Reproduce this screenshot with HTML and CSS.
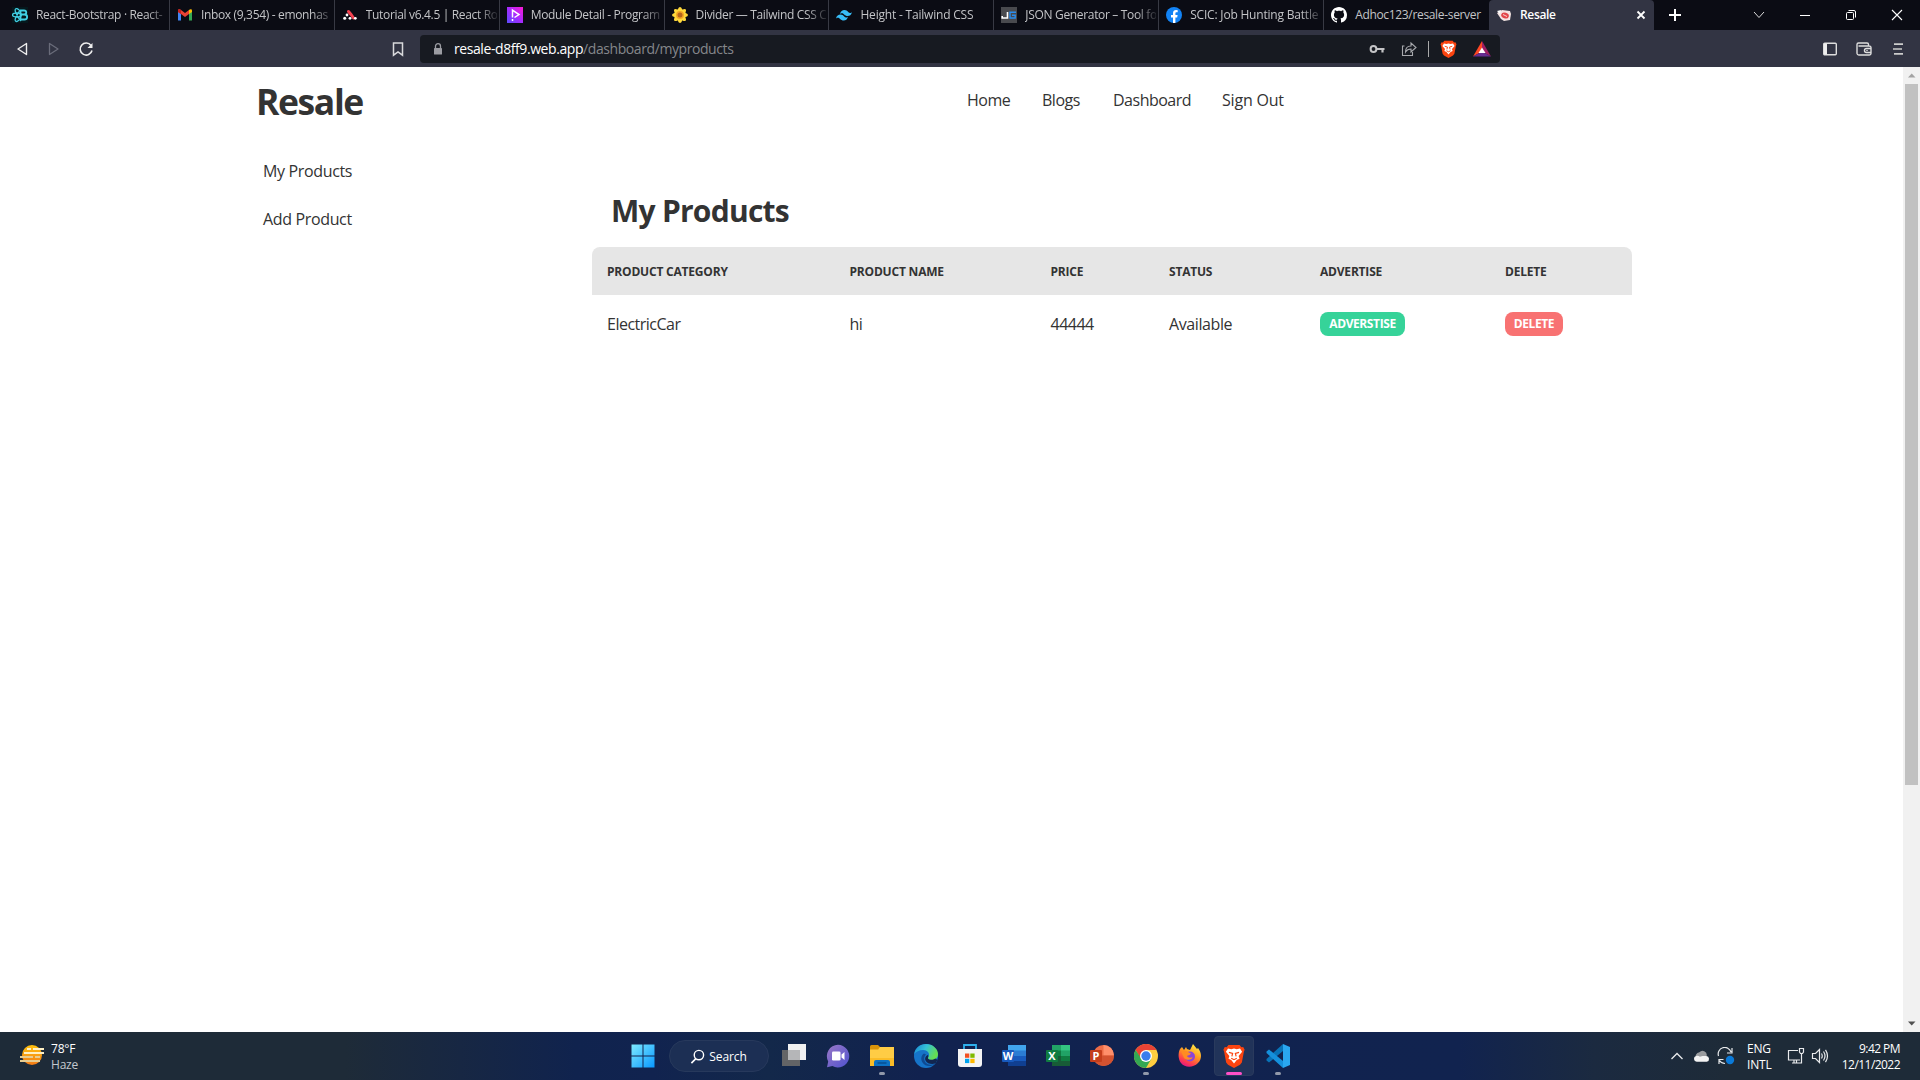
FILE: index.html
```html
<!DOCTYPE html>
<html lang="en">
<head>
<meta charset="utf-8">
<title>Resale</title>
<link rel="stylesheet" href="styles.css">
</head>
<body>
<div class="screen">
  <div class="tabs">
    <div class="tab">
      <svg class="fav" viewBox="0 0 16 16"><rect width="16" height="16" fill="#05181d"/><g fill="none" stroke="#41cfe4" stroke-width="1.3"><path d="M7 3C4 0 2 2 4 6c2 5 4 7 5 8M7 13c-3 3-5 1-3-3l4-7"/><ellipse cx="5" cy="8" rx="4.5" ry="2"/><path d="M8.500 3.500h3.500c3 0 3 4 0 4h-3.500zM8.500 7.500h4c3.500 0 3.500 5 0 5h-4z" stroke-width="1.8"/></g></svg>
      <span class="tab-title">React-Bootstrap · React-</span></div>
    <div class="tab">
      <svg class="fav" viewBox="0 0 16 16"><path d="M1 3.500v10h3V6z" fill="#4285f4"/><path d="M15 3.500v10h-3V6z" fill="#34a853"/><path d="M1 5V3.500C1 2 3 2 4 3l4 3 4-3v4L8 10 4 7z" fill="#ea4335"/><path d="M12 3c1-1 3-1 3 .5V5l-3 2z" fill="#fbbc04"/><path d="M1 3.500C1 2 3 2 4 3v4L1 5z" fill="#c5221f"/></svg>
      <span class="tab-title">Inbox (9,354) - emonhas</span></div>
    <div class="tab">
      <svg class="fav" viewBox="0 0 16 16"><path d="M6.500 4.500 9 7.500l2.500 3.500" stroke="#f44250" stroke-width="3" stroke-linecap="round" fill="none"/><g fill="#fff"><circle cx="5" cy="8" r="1.400"/><circle cx="2.700" cy="11.300" r="1.500"/><circle cx="8" cy="11.300" r="1.400"/><circle cx="13.300" cy="11.300" r="1.400"/></g></svg>
      <span class="tab-title">Tutorial v6.4.5 | React Ro</span></div>
    <div class="tab">
      <svg class="fav" viewBox="0 0 16 16"><defs><linearGradient id="ph" x1="0" y1="1" x2="1" y2="0"><stop offset="0" stop-color="#5b4bff"/><stop offset=".5" stop-color="#a62bff"/><stop offset="1" stop-color="#ff19d4"/></linearGradient></defs><rect width="16" height="16" fill="url(#ph)"/><path d="M5.500 10.500V3.200l6.500 4.300-4.500 3M5.500 12v2" fill="none" stroke="#fff" stroke-width="1.500"/></svg>
      <span class="tab-title">Module Detail - Program</span></div>
    <div class="tab">
      <svg class="fav" viewBox="0 0 16 16"><g fill="#ffd83b"><ellipse cx="8" cy="8" rx="3" ry="8"/><ellipse cx="8" cy="8" rx="3" ry="8" transform="rotate(45 8 8)"/><ellipse cx="8" cy="8" rx="3" ry="8" transform="rotate(90 8 8)"/><ellipse cx="8" cy="8" rx="3" ry="8" transform="rotate(135 8 8)"/></g><circle cx="8" cy="8" r="4" fill="#f5a623"/><circle cx="8" cy="8" r="2.500" fill="#b5651d"/></svg>
      <span class="tab-title">Divider — Tailwind CSS C</span></div>
    <div class="tab">
      <svg class="fav" viewBox="0 0 16 16"><path d="M4 7c.8-3 2.300-4 4.500-4C12 3 12 6 14 6c1 0 1.500-.3 2-1-.8 3-2.300 4-4.300 4C8.500 9 8 6.200 6 6.200 5 6.200 4.500 6.500 4 7zM0 11.500c.8-3 2.300-4 4.500-4 3.500 0 3.500 3 5.500 3 1 0 1.500-.3 2-1-.8 3-2.300 4-4.300 4-3.200 0-3.700-2.800-5.700-2.800-1 0-1.500.3-2 .8z" fill="#38bdf8"/></svg>
      <span class="tab-title wide">Height - Tailwind CSS</span></div>
    <div class="tab">
      <svg class="fav" viewBox="0 0 16 16"><rect width="16" height="16" fill="#494a4e"/><path d="M6.500 5v6H1.200V9" fill="none" stroke="#fff" stroke-width="1.600"/><path d="M15 5.200H9V11h5.200V8.300H11" fill="none" stroke="#2a8df0" stroke-width="1.400"/></svg>
      <span class="tab-title">JSON Generator – Tool fo</span></div>
    <div class="tab">
      <svg class="fav" viewBox="0 0 16 16"><circle cx="8" cy="8" r="8" fill="#1283f5"/><path d="M7 16v-5.600H5V8h2V6.300c0-2.200 1.200-3.300 3.100-3.300l1.600.2v2h-1c-1 0-1.300.6-1.300 1.200V8h2.200l-.4 2.400H9.400V16z" fill="#fff"/></svg>
      <span class="tab-title wide">SCIC: Job Hunting Battle</span></div>
    <div class="tab tab-last">
      <svg class="fav" viewBox="0 0 16 16"><path fill="#fff" d="M8 0C3.580 0 0 3.580 0 8c0 3.540 2.290 6.530 5.470 7.590.4.070.55-.17.55-.38 0-.19-.01-.82-.01-1.490-2.010.37-2.530-.49-2.690-.94-.09-.23-.48-.94-.82-1.130-.28-.15-.68-.52-.01-.53.63-.01 1.080.58 1.230.82.72 1.210 1.870.87 2.330.66.07-.52.28-.87.510-1.070-1.780-.2-3.640-.89-3.640-3.950 0-.87.310-1.590.82-2.150-.08-.2-.36-1.020.08-2.120 0 0 .67-.21 2.200.82.640-.18 1.320-.27 2-.27s1.360.09 2 .27c1.530-1.040 2.200-.82 2.200-.82.440 1.100.160 1.920.08 2.120.510.560.82 1.270.82 2.150 0 3.070-1.870 3.750-3.650 3.950.290.250.540.730.540 1.480 0 1.070-.01 1.930-.01 2.200 0 .210.150.460.550.380A8.010 8.010 0 0 0 16 8c0-4.420-3.580-8-8-8z"/></svg>
      <span class="tab-title">Adhoc123/resale-server</span></div>
    <div class="tab tab-active">
      <svg class="fav" viewBox="0 0 16 16"><path d="M1 6l5-3 8 1 1 3-1 6-6 1-3-2z" fill="#f4e4e2"/><path d="M1 4l4-1-1 4z" fill="#fff"/><ellipse cx="9" cy="8.500" rx="3.900" ry="2.900" transform="rotate(18 9 8.500)" fill="#e2474a"/><path d="M7 7.500l4 2" stroke="#fbd0cc"/></svg>
      <span class="tab-title">Resale</span>
      <svg class="tab-close" viewBox="0 0 10 10"><path d="M1.500 1.500l7 7m0-7l-7 7" stroke="#fff" stroke-width="1.800"/></svg></div>
    <svg class="plus" viewBox="0 0 14 14"><path d="M7 1v12M1 7h12" stroke="#fff" stroke-width="2"/></svg>
    <div class="window-buttons">
      <svg viewBox="0 0 12 12"><path d="M1 3l5 5.500L11 3" fill="none" stroke="#ddd"/></svg>
      <svg viewBox="0 0 12 12"><path d="M1 6.500h10" stroke="#fff"/></svg>
      <svg viewBox="0 0 12 12"><rect x="1.500" y="3.500" width="7" height="7" rx="1" fill="none" stroke="#fff"/><path d="M3.500 1.500H9a1.500 1.500 0 0 1 1.500 1.500v5.500" fill="none" stroke="#fff"/></svg>
      <svg viewBox="0 0 12 12"><path d="M1 1l10 10M11 1L1 11" stroke="#fff" stroke-width="1.100"/></svg>
    </div>
  </div>

  <div class="toolbar">
    <div class="nav-icons">
      <svg viewBox="0 0 16 16"><path d="M12.500 2.500L4 8l8.500 5.500z" fill="none" stroke="#eee" stroke-width="1.400" stroke-linejoin="round"/></svg>
      <svg viewBox="0 0 16 16"><path d="M3.500 2.500L12 8l-8.500 5.500z" fill="none" stroke="#6a6c7a" stroke-width="1.300" stroke-linejoin="round"/></svg>
      <svg viewBox="0 0 16 16"><path d="M13 4.500A6 6 0 1 0 14 9.500" fill="none" stroke="#eee" stroke-width="1.600"/><path d="M14.500 2v5h-5z" fill="#eee"/></svg>
    </div>
    <svg class="bookmark" viewBox="0 0 16 16"><path d="M3.500 2h9v12.200L8 11l-4.500 3.200z" fill="none" stroke="#d9d9dc" stroke-width="1.500"/></svg>
    <div class="address">
      <svg class="lock" viewBox="0 0 10 12"><path d="M2.500 5V3.200a2.500 2.500 0 0 1 5 0V5" fill="none" stroke="#9b9ca2" stroke-width="1.300"/><rect x="1" y="5" width="8" height="6.500" rx=".6" fill="#9b9ca2"/></svg>
      <span class="url"><b>resale-d8ff9.web.app</b>/dashboard/myproducts</span>
      <div class="address-icons">
        <svg viewBox="0 0 16 16"><circle cx="4.500" cy="8" r="2.900" fill="none" stroke="#c4c4c6" stroke-width="2"/><path d="M7 8h8.500M13.500 8v3.500" stroke="#c4c4c6" stroke-width="2.200"/></svg>
        <svg viewBox="0 0 16 16"><path d="M3.500 5H1.500v9.500h10V11" fill="none" stroke="#a8a9ad" stroke-width="1.100"/><path d="M4.500 11c0-4 2-6 5.500-6V2l5 4.500-5 4.500V8C7.500 8 5.800 8.800 4.500 11z" fill="none" stroke="#a8a9ad" stroke-width="1.100"/></svg>
        <i class="divider"></i>
        <svg class="shield" viewBox="0 0 24 26"><use href="#brave"/></svg>
        <svg class="bat" viewBox="0 0 18 16"><path d="M9 0L0 15.500l9-5z" fill="#ff4724"/><path d="M9 0l9 15.500-9-5z" fill="#9e1f63"/><path d="M0 15.500h18l-9-5z" fill="#662d91"/><path d="M9 6.500l3.500 5.500h-7z" fill="#fff"/></svg>
      </div>
    </div>
    <div class="menu-icons">
      <svg viewBox="0 0 16 16"><rect x="1.700" y="2.200" width="12.600" height="11.600" rx="1" fill="none" stroke="#ddd" stroke-width="1.400"/><path d="M2 2.500h3v11H2z" fill="#eee"/></svg>
      <svg viewBox="0 0 16 16"><path d="M12.500 5V3.500Q12.500 2 11 2H2.500A1.500 1.500 0 0 0 1 3.500v9A1.800 1.800 0 0 0 2.800 14h10.400a1.800 1.800 0 0 0 1.800-1.800V6.800A1.800 1.800 0 0 0 13.200 5H2.500" fill="none" stroke="#ddd" stroke-width="1.400"/><path d="M15 7.500h-4.500a2 2 0 0 0 0 4H15" fill="none" stroke="#ddd" stroke-width="1.400"/><circle cx="11" cy="9.500" r=".8" fill="#ddd"/></svg>
      <svg viewBox="0 0 16 16"><path d="M4 3.200h9M3 8h9M4 12.800h9" stroke="#ccc" stroke-width="1.700"/></svg>
    </div>
  </div>

  <div class="viewport">
    <div class="page">
      <header class="site-header">
        <a class="brand">Resale</a>
        <nav class="site-nav"><a class="n-home">Home</a><a class="n-blogs">Blogs</a><a class="n-dash">Dashboard</a><a class="n-out">Sign Out</a></nav>
      </header>
      <div class="content">
        <aside class="sidebar"><a>My Products</a><a>Add Product</a></aside>
        <main class="products">
          <h2>My Products</h2>
          <table>
            <colgroup><col class="c1"><col class="c2"><col class="c3"><col class="c4"><col class="c5"><col class="c6"></colgroup>
            <thead><tr><th>Product Category</th><th>Product Name</th><th>Price</th><th>Status</th><th>Advertise</th><th>Delete</th></tr></thead>
            <tbody><tr><td>ElectricCar</td><td>hi</td><td>44444</td><td>Available</td><td><button class="btn advertise">Adverstise</button></td><td><button class="btn delete">Delete</button></td></tr></tbody>
          </table>
        </main>
      </div>
    </div>
    <div class="scrollbar">
      <svg viewBox="0 0 17 17"><path d="M5 10.500h7.500L8.700 6.500z" fill="#a3a3a3"/></svg>
      <i class="thumb"></i>
      <svg class="down" viewBox="0 0 17 17"><path d="M5 6.500h7.500L8.700 10.500z" fill="#505050"/></svg>
    </div>
  </div>

  <div class="taskbar">
    <div class="weather">
      <svg viewBox="0 0 24 24"><defs><linearGradient id="sun" x1="0" y1="0" x2="0" y2="1"><stop offset="0" stop-color="#ffc20e"/><stop offset="1" stop-color="#f47b16"/></linearGradient></defs><circle cx="12" cy="12" r="10" fill="url(#sun)"/><path d="M7 6h4m2 0h11M4 10h20" stroke="#fff0c4" stroke-width="2"/><path d="M0 14h13m2 0h5M0 18h20" stroke="#e9cc8f" stroke-width="2"/></svg>
      <div><div>78°F</div><div class="dim">Haze</div></div>
    </div>
    <div class="apps">
      <div class="app"><svg viewBox="0 0 24 24"><defs><linearGradient id="win" x1="0" y1="0" x2="1" y2="1"><stop offset="0" stop-color="#7eeaff"/><stop offset="1" stop-color="#0898ff"/></linearGradient></defs><path d="M.5.5h11v11H.5zm12 0h11v11h-11zM.5 12.500h11v11H.5zm12 0h11v11h-11z" fill="url(#win)"/></svg></div>
      <div class="search"><svg viewBox="0 0 16 16"><circle cx="9.500" cy="6.500" r="5" fill="none" stroke="#fff" stroke-width="1.500"/><path d="M6 10.500L1.500 15" stroke="#fff" stroke-width="1.700"/></svg>Search</div>
      <div class="app"><svg viewBox="0 0 24 24"><path d="M0 6h18v16H0z" fill="#636466"/><path d="M6 0h18v16H6z" fill="#f1f1f1"/><path d="M6 6h12v10H6z" fill="#b5b6b8"/></svg></div>
      <div class="app"><svg viewBox="0 0 24 24"><defs><linearGradient id="chat" x1="0" y1="0" x2="1" y2="1"><stop offset="0" stop-color="#9a78c6"/><stop offset="1" stop-color="#4f52cf"/></linearGradient></defs><path d="M12 .8A11.300 11.300 0 1 1 6.500 22L1 23.200 2.200 17.500A11.300 11.300 0 0 1 12 .8z" fill="url(#chat)"/><rect x="6" y="7.500" width="8.500" height="9" rx="1.300" fill="#fff"/><path d="M15.500 10.500l3-2.500v8l-3-2.500z" fill="#fff"/></svg></div>
      <div class="app running"><svg viewBox="0 0 24 24"><path d="M0 2.500Q0 1 1.500 1H8l2.500 2.500L8 6H0z" fill="#d9930a"/><path d="M0 5.500h8L10 3h14v19H0z" fill="#ffcc45"/><path d="M0 14h24v8H0z" fill="#fbbc27"/><path d="M4 22v-4q0-2 2-2h12q2 0 2 2v4z" fill="#0d72c4"/><path d="M7.500 19h9" stroke="#075193" stroke-width="1.500"/></svg></div>
      <div class="app"><svg viewBox="0 0 24 24"><defs><linearGradient id="edge" x1="0" y1="0" x2="1" y2=".4"><stop offset="0" stop-color="#1683d2"/><stop offset=".5" stop-color="#34c1d8"/><stop offset="1" stop-color="#64df52"/></linearGradient></defs><circle cx="12" cy="12" r="12" fill="#1674c9"/><path d="M.2 10C1 4 6 0 12 0c7 0 12 5 12 10 0 4-3 6-6 6s-4-1-4-2 1.500-1.500 1-4c-.6-2.500-3-4-6-4C5 6 2 8 .2 10z" fill="url(#edge)"/><path d="M10 9.500c-3 2-3.500 6-1.500 9 2.500 3.800 8 5 12.500 1.500-4 1.500-9 1-10.500-3.500-1-3 .500-5 1.500-6z" fill="#0f4a92"/><path d="M14 11c1 2-.6 2.500 0 3.500.8 1.500 4.500 2 7.500 0l2 1.500-2 3.500c-3.500 1-8.500.5-10-3-1-2.500.5-5 2.500-5.500z" fill="#12264f"/></svg></div>
      <div class="app"><svg viewBox="0 0 24 24"><path d="M6 6V1h12v5" fill="none" stroke="#2fb1ee" stroke-width="1.800"/><path d="M0 5h24v15q0 3-3 3H3q-3 0-3-3z" fill="#f4f4f5"/><path d="M7 9.500h4.300v4.300H7z" fill="#f25022"/><path d="M12.300 9.500h4.300v4.300h-4.300z" fill="#7fba00"/><path d="M7 14.800h4.300v4.300H7z" fill="#00a4ef"/><path d="M12.300 14.800h4.300v4.300h-4.300z" fill="#ffb900"/></svg></div>
      <div class="app"><svg viewBox="0 0 24 24"><path d="M6 1h18v6H6z" fill="#41a5ee"/><path d="M6 6.500h18V12H6z" fill="#2b7cd3"/><path d="M6 12h18v5.500H6z" fill="#185abd"/><path d="M6 17h18v5H6z" fill="#103f91"/><rect y="6" width="12" height="12" rx="1" fill="#185abd"/><text x="6" y="15.500" class="glyph">W</text></svg></div>
      <div class="app"><svg viewBox="0 0 24 24"><path d="M6 1h9v6H6z" fill="#21a366"/><path d="M15 1h9v6h-9z" fill="#33c481"/><path d="M6 6.500h9V12H6z" fill="#107c41"/><path d="M15 6.500h9V12h-9z" fill="#21a366"/><path d="M6 12h18v10H6z" fill="#185c37"/><path d="M15 12h9v5h-9z" fill="#107c41"/><rect y="6" width="12" height="12" rx="1" fill="#107c41"/><text x="6" y="15.500" class="glyph">X</text></svg></div>
      <div class="app"><svg viewBox="0 0 24 24"><circle cx="13.500" cy="11.500" r="10.500" fill="#ed6c47"/><path d="M13.500 1A10.500 10.500 0 0 1 24 11.500H13.500z" fill="#ff8f6b"/><path d="M3 11.500h21a10.500 10.500 0 0 1-21 0z" fill="#d35230"/><rect y="6" width="12" height="12" rx="1" fill="#c43e1c"/><text x="6" y="15.500" class="glyph">P</text></svg></div>
      <div class="app running"><svg viewBox="0 0 24 24"><circle cx="12" cy="12" r="12" fill="#ffcd40"/><path d="M1.600 6A12 12 0 0 1 22.400 6H12L7 15z" fill="#ea4335"/><path d="M1.600 6A12 12 0 0 0 12 24l5.200-9-5.200 2-5-3z" fill="#34a853"/><circle cx="12" cy="12" r="6" fill="#fff"/><circle cx="12" cy="12" r="4.700" fill="#3b7ded"/></svg></div>
      <div class="app"><svg viewBox="0 0 24 24"><defs><linearGradient id="fox" x1=".8" y1="0" x2=".3" y2="1"><stop offset="0" stop-color="#fff04a"/><stop offset=".45" stop-color="#ff9a1f"/><stop offset=".8" stop-color="#ff3b4f"/><stop offset="1" stop-color="#e31587"/></linearGradient></defs><path d="M2 5l2-2 2 3 2-3 1 2 3 1 3-6 4 5 1-1c4 5 4 11 0 15-5 5-13 5-17 0C0 15 0 9 2 5z" fill="url(#fox)"/><circle cx="12" cy="12.500" r="5" fill="#8a45d8"/><path d="M3 7c3-1 6 0 8 1.500l2 1c-1 2-3 1.500-4 2.500 1 2 4 2 5.500 1 0 3-6 4-8.500 1z" fill="#ff8c22"/></svg></div>
      <div class="app current"><svg viewBox="0 0 24 26"><use href="#brave"/></svg></div>
      <div class="app running"><svg viewBox="0 0 24 24"><path d="M17 0l7 3v18l-7 3z" fill="#2aa7f0"/><path d="M17 0v7L3 18.500.5 16.500V15z" fill="#0873b8"/><path d="M17 24v-7L3 5.500.5 7.500V9z" fill="#1590dc"/></svg></div>
    </div>
    <div class="tray">
      <svg class="t-chev" viewBox="0 0 14 14"><path d="M1.500 10L7 4.500l5.500 5.500" fill="none" stroke="#e8eaec" stroke-width="1.300"/></svg>
      <svg class="t-cloud" viewBox="0 0 16 12"><path d="M3 8a4 4 0 0 1 3-6 4 4 0 0 1 7 3l-4 4z" fill="#9a9c9f"/><path d="M3.500 11a2.800 2.800 0 0 1-.5-5.500q2-.5 3.500.8L9 5.500l3.500 0A2.800 2.800 0 0 1 13 11z" fill="#f3f3f3"/></svg>
      <svg class="t-sync" viewBox="0 0 18 18"><path d="M1.500 9A6.500 6.500 0 0 1 14 5M15 1v5h-5M2 17v-4.500h4.500M2.500 13.500Q4.500 16.500 8 16.500" fill="none" stroke="#e8eaec" stroke-width="1.200"/><circle cx="13" cy="13" r="4.200" fill="#0b7ad8"/></svg>
      <div class="lang"><div>ENG</div><div>INTL</div></div>
      <svg class="t-net" viewBox="0 0 18 18"><path d="M11 3.500H1.500v9.500H13M5 16h9M7 13v3M9.500 13v3M14.500 7v9.500M12.500 1.500h4V5l-1 1.500h-2l-1-1.500z" fill="none" stroke="#e8eaec" stroke-width="1.200"/></svg>
      <svg class="t-vol" viewBox="0 0 18 16"><path d="M1.500 5.500h3l4-4v13l-4-4h-3zM10.500 5.500q1.500 2.500 0 5M12.500 3.500q3 4.500 0 9M14.500 1.800q4 6.200 0 12.400" fill="none" stroke="#e8eaec" stroke-width="1.200"/></svg>
      <div class="clock"><div>9:42 PM</div><div>12/11/2022</div></div>
    </div>
  </div>
</div>

<svg width="0" height="0" class="symbols"><defs><g id="brave"><path d="M6 1h12l2 2.500 2-.3 1.500 3-.8 2.300-2.200 11.500-2 2.500L12 26l-6.500-3.500-2-2.500L1.300 8.500.5 6.200l1.500-3 2 .3z" fill="#fb4410"/><path d="M12 5l3 .8L18.500 5l2.300 3.500-3.800 4.500 1 3-3 1.200-3 3.800-3-3.800L6 16l1-3-3.800-4.500L5.500 5 9 5.800z" fill="#fff"/><path d="M6.500 9l4 1.200-.8 3.300M17.500 9l-4 1.200.8 3.300M9 15.500l3 1.500 3-1.500" fill="none" stroke="#fb4410" stroke-width="1.300"/></g></defs></svg>
</body>
</html>
```
FILE: styles.css
```css
* { box-sizing: border-box; }
body { margin: 0; overflow: hidden; font-family: "Open Sans", "Noto Sans", sans-serif; }
svg { display: block; flex: none; }
.symbols { position: absolute; }
.screen { width: 1920px; height: 1080px; display: flex; flex-direction: column; background: #fff; }

/* Browser tabs */
.tabs { height: 30px; flex: none; display: flex; align-items: center; background: #0b0c14; padding-left: 4px; }
.tab { width: 164.9px; height: 30px; flex: none; display: flex; align-items: center; gap: 8px; padding: 0 2px 1px 7px; border-right: 1px solid #383a44; color: #c3c4c7; font-size: 12px; letter-spacing: -.33px; }
.tab:first-child { width: 165.9px; padding-left: 8px; }
.tab-last { border-right-color: transparent; }
.tab-active { background: #323443; border-radius: 4px 4px 0 0; color: #fff; border: 0; font-weight: 600; }
.fav { width: 16px; height: 16px; }
.tab-title { flex: 1; min-width: 0; white-space: nowrap; -webkit-mask-image: linear-gradient(90deg, #000 calc(100% - 20px), rgba(0,0,0,.15)); mask-image: linear-gradient(90deg, #000 calc(100% - 20px), rgba(0,0,0,.15)); }
.wide { letter-spacing: -.2px; }
.tab-last .tab-title, .tab-active .tab-title { -webkit-mask-image: none; mask-image: none; }
.tab-close { width: 10px; height: 10px; margin-right: 6px; }
.plus { width: 14px; height: 14px; margin-left: 14px; }
.window-buttons { margin-left: auto; margin-right: 17px; display: flex; gap: 34px; }
.window-buttons svg { width: 12px; height: 12px; }

/* Address row */
.toolbar { height: 37px; flex: none; display: flex; align-items: center; background: #323443; padding: 0 14px; }
.toolbar svg { width: 16px; height: 16px; }
.nav-icons { display: flex; gap: 16px; }
.toolbar .bookmark { margin-left: 296px; }
.address { width: 1080px; height: 28px; margin-left: 14px; display: flex; align-items: center; background: #171a21; border-radius: 4px; }
.toolbar .lock { width: 10px; height: 12px; margin-left: 13px; }
.url { margin-left: 11px; padding-bottom: 1px; font-size: 14px; letter-spacing: -.42px; color: #85878b; }
.url b { font-weight: 400; color: #fff; }
.address-icons { margin-left: auto; margin-right: 9px; display: flex; align-items: center; }
.address-icons svg + svg { margin-left: 16px; }
.divider { width: 1px; height: 16px; margin: 0 11px 0 11px; background: #aaa; }
.toolbar .shield { width: 17px; height: 18px; }
.toolbar .bat { width: 18px; height: 16px; }
.menu-icons { margin-left: auto; display: flex; gap: 18px; }

/* Web page */
.viewport { flex: 1; min-height: 0; display: flex; }
.page { flex: 1; color: #333; padding: 0 271px 0 257px; }
.site-header { height: 64px; display: flex; align-items: center; }
.brand { width: 711px; font-size: 35.5px; font-weight: 700; letter-spacing: -1.4px; line-height: 40px; padding-top: 4px; margin-left: -1px; }
.site-nav { display: flex; font-size: 16px; letter-spacing: -.5px; line-height: 24px; padding-top: 1px; }
.n-home { width: 75px; }
.n-blogs { width: 71px; }
.n-dash { width: 109px; }
.n-out { letter-spacing: -.2px; }
.content { display: flex; }
.sidebar { width: 335px; padding: 16px 0 0 6px; display: flex; flex-direction: column; font-size: 16px; letter-spacing: -.35px; }
.sidebar a { height: 48px; line-height: 48px; }
.products { width: 1040px; padding-top: 60px; }
.products h2 { margin: 0 0 16px 19px; font-size: 30px; line-height: 40px; font-weight: 700; letter-spacing: -.75px; }
table { width: 1040px; table-layout: fixed; border-collapse: separate; border-spacing: 0; }
.c1 { width: 241.5px; } .c2 { width: 201px; } .c3 { width: 118.5px; } .c4 { width: 151px; } .c5 { width: 185px; } .c6 { width: 143px; }
th { height: 48px; padding: 0 16px; background: #e6e6e6; text-align: left; text-transform: uppercase; font-size: 12px; font-weight: 700; letter-spacing: -.2px; }
th:first-child, td:first-child { padding-left: 15px; }
th:first-child { border-top-left-radius: 8px; }
th:last-child { border-top-right-radius: 8px; }
td { height: 58px; padding: 0 16px; font-size: 16px; letter-spacing: -.5px; }
td:nth-child(4) { letter-spacing: -.4px; }
.btn { display: block; height: 24px; padding: 0; border: 0; border-radius: 8px; color: #fff; font: 700 12px/24px "Open Sans", sans-serif; letter-spacing: -.4px; text-transform: uppercase; text-align: center; }
.advertise { width: 85px; background: #36d399; }
.delete { width: 58px; background: #f87272; }
.scrollbar { width: 17px; display: flex; flex-direction: column; background: #f1f1f1; }
.scrollbar svg { width: 17px; height: 17px; }
.thumb { height: 701px; margin: 0 2px; background: #c1c1c1; }
.scrollbar .down { margin-top: auto; }

/* Taskbar */
.taskbar { height: 48px; flex: none; display: grid; grid-template-columns: 1fr 681px 1fr; background: linear-gradient(90deg, #1e2b38 0, #1e2b38 18%, #10234e 30%, #11234f 34%, #13284a 40%, #11224f 48%, #11234f 76%, #1b2a40 83%, #1e2b38 90%); color: #fff; font-size: 12px; line-height: 16px; }
.weather { display: flex; align-items: center; gap: 7px; padding-left: 20px; letter-spacing: -.2px; }
.weather svg { width: 24px; height: 24px; margin-bottom: 3px; }
.weather > div { padding-top: 1px; }
.dim { color: #c3c8cd; }
.apps { display: flex; align-items: center; padding-left: 1px; }
.app { width: 44px; height: 40px; display: flex; flex-direction: column; align-items: center; padding-top: 8px; }
.app svg { width: 24px; height: 24px; }
.running::after { content: ""; width: 6px; height: 3px; margin-top: 4px; border-radius: 2px; background: #9299aa; }
.current { width: 40px; margin: 0 2px; border-radius: 4px; background: #213359; border: 1px solid #2a3a5d; padding-top: 7px; }
.current::after { content: ""; width: 16px; height: 3px; margin-top: 4px; border-radius: 2px; background: #ff50c8; }
.glyph { font: 700 11px "Open Sans", sans-serif; fill: #fff; text-anchor: middle; letter-spacing: 0; }
.search { width: 100px; height: 32px; margin: 0 3px 0 4px; padding-top: 1px; border-radius: 16px; background: #1c2f54; border: 1px solid #27395c; display: flex; align-items: center; justify-content: center; gap: 4px; letter-spacing: -.1px; }
.search svg { width: 15px; height: 15px; }
.tray { display: flex; align-items: center; justify-content: flex-end; padding-right: 19px; letter-spacing: -.2px; }
.t-chev { width: 14px; height: 14px; }
.t-cloud { width: 17px; height: 13px; margin-left: 9px; }
.t-sync { width: 18px; height: 18px; margin-left: 7px; }
.lang { width: 26px; margin-left: 12px; padding-top: 1px; }
.t-net { width: 18px; height: 18px; margin-left: 14px; }
.t-vol { width: 18px; height: 16px; margin-left: 6px; }
.clock { width: 60px; margin-left: 12px; padding: 1px 1px 0 0; text-align: right; white-space: nowrap; letter-spacing: -.55px; }
```
